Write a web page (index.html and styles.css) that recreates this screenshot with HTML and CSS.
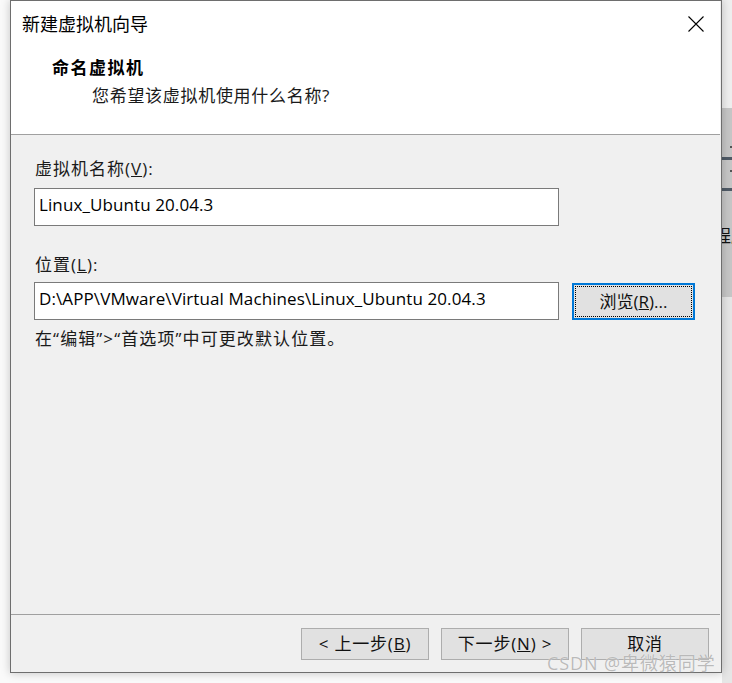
FILE: index.html
```html
<!DOCTYPE html>
<html lang="zh-CN">
<head>
<meta charset="utf-8">
<title>新建虚拟机向导</title>
<link rel="stylesheet" href="styles.css">
</head>
<body>
<div class="desk-right">
  <div class="dr-top"></div>
  <div class="dr-mid">
    <div class="dr-dot dot1"></div>
    <div class="dr-bar bar1"></div>
    <div class="dr-dot dot2"></div>
    <div class="dr-bar bar2"></div>
    <div class="dr-text">程序</div>
  </div>
  <div class="dr-bottom"></div>
</div>
<div class="dialog">
  <div class="header">
    <div class="titlebar">
      <span class="title">新建虚拟机向导</span>
      <svg class="close" width="16" height="16" viewBox="0 0 16 16"><path d="M0.5 0.5 L15.5 15.5 M15.5 0.5 L0.5 15.5" stroke="#000" stroke-width="1.1" fill="none"/></svg>
    </div>
    <div class="heading">命名虚拟机</div>
    <div class="subheading">您希望该虚拟机使用什么名称?</div>
  </div>
  <div class="content">
    <div class="label">虚拟机名称(<u>V</u>):</div>
    <div class="field">Linux_Ubuntu 20.04.3</div>
    <div class="label label2">位置(<u>L</u>):</div>
    <div class="row">
      <div class="field">D:\APP\VMware\Virtual Machines\Linux_Ubuntu 20.04.3</div>
      <div class="btn browse"><span class="focus">浏览(<u>R</u>)...</span></div>
    </div>
    <div class="hint">在“编辑”&gt;“首选项”中可更改默认位置。</div>
  </div>
  <div class="footer">
    <div class="btn">&lt; 上一步(<u>B</u>)</div>
    <div class="btn">下一步(<u>N</u>) &gt;</div>
    <div class="btn">取消</div>
  </div>
</div>
<div class="watermark">CSDN @卑微猿同学</div>
</body>
</html>
```

FILE: styles.css
```css
html, body {
  margin: 0;
  padding: 0;
}
body {
  width: 732px;
  height: 683px;
  background: #fafafa;
  position: relative;
  overflow: hidden;
  font-family: "Open Sans", "Noto Sans CJK SC", sans-serif;
  color: #000;
}

.desk-right {
  position: absolute;
  left: 722px;
  top: 0;
  width: 10px;
  height: 683px;
  display: flex;
  flex-direction: column;
}
.dr-top {
  height: 108px;
  background: #efefef;
}
.dr-mid {
  height: 189px;
  background: #c6c6c6;
  position: relative;
  overflow: hidden;
}
.dr-dot {
  position: absolute;
  left: 8px;
  width: 2px;
  height: 2px;
  background: #555;
}
.dot1 { top: 38px; }
.dot2 { top: 62px; }
.dr-bar {
  position: absolute;
  left: 0;
  width: 10px;
  height: 3px;
  background: #4f5a66;
}
.bar1 { top: 49px; }
.bar2 { top: 80px; }
.dr-text {
  position: absolute;
  left: -8px;
  top: 118px;
  font-size: 17px;
  line-height: 20px;
  white-space: nowrap;
  color: #111;
}
.dr-bottom {
  flex: 1;
  background: #e6e6e6;
}

.dialog {
  position: relative;
  z-index: 1;
  margin-left: 10px;
  width: 712px;
  height: 673px;
  box-sizing: border-box;
  border: 1px solid #6e6e6e;
  background: #f0f0f0;
  display: flex;
  flex-direction: column;
  box-shadow: 0 0 9px rgba(0, 0, 0, 0.22);
}

.header {
  height: 133px;
  background: #fff;
  border-bottom: 1px solid #a0a0a0;
  margin-right: 1px;
  padding-left: 11px;
  flex: none;
}
.titlebar {
  display: flex;
  justify-content: space-between;
  align-items: flex-start;
  padding-top: 13px;
  padding-right: 16px;
  height: 31px;
}
.title {
  font-size: 18px;
  line-height: 20px;
  color: #000;
}
.close {
  margin-top: 2px;
}
.heading {
  margin-left: 30px;
  margin-top: 13px;
  font-size: 17px;
  line-height: 20px;
  font-weight: bold;
  letter-spacing: 1.5px;
}
.subheading {
  margin-left: 70px;
  margin-top: 8px;
  font-size: 17px;
  line-height: 20px;
  letter-spacing: 0.7px;
  color: #1a1a1a;
}

.content {
  flex: 1;
  padding-left: 23px;
  padding-top: 24px;
}
.label {
  font-size: 17px;
  line-height: 20px;
  padding-left: 1px;
  letter-spacing: 1px;
  color: #1a1a1a;
  margin-bottom: 9px;
}
.label2 {
  margin-top: 29px;
  margin-bottom: 7px;
}
.field {
  width: 525px;
  height: 38px;
  box-sizing: border-box;
  border: 1px solid #7a7a7a;
  background: #fff;
  padding: 4px 0 0 4px;
  font-size: 17px;
  line-height: 24px;
  letter-spacing: 0.1px;
  white-space: nowrap;
  color: #000;
}
.row {
  display: flex;
  align-items: flex-start;
  gap: 13px;
}
.btn {
  width: 128px;
  height: 32px;
  box-sizing: border-box;
  border: 1px solid #adadad;
  background: #e1e1e1;
  display: flex;
  align-items: center;
  justify-content: center;
  font-size: 17px;
  line-height: 20px;
  letter-spacing: 0.8px;
  color: #111;
}
.browse {
  width: 123px;
  height: 37px;
  margin-top: 1px;
  border: 2px solid #0078d7;
  padding: 1px;
  letter-spacing: 0;
}
.focus {
  width: 100%;
  height: 100%;
  box-sizing: border-box;
  border: 1px dotted #000;
  display: flex;
  align-items: center;
  justify-content: center;
}
.hint {
  margin-top: 9px;
  padding-left: 1px;
  font-size: 17px;
  line-height: 20px;
  letter-spacing: 1.1px;
  color: #1a1a1a;
}

.footer {
  flex: none;
  height: 58px;
  border-top: 1px solid #a0a0a0;
  margin-right: 1px;
  display: flex;
  justify-content: flex-end;
  gap: 12px;
  padding: 13px 11px 0 0;
  box-sizing: border-box;
}

.watermark {
  position: absolute;
  z-index: 2;
  left: 547px;
  top: 652px;
  font-size: 18px;
  line-height: 22px;
  letter-spacing: 0.9px;
  color: rgba(165, 165, 165, 0.75);
  text-shadow: 0 0 1px rgba(255, 255, 255, 0.9);
  white-space: nowrap;
}
```
